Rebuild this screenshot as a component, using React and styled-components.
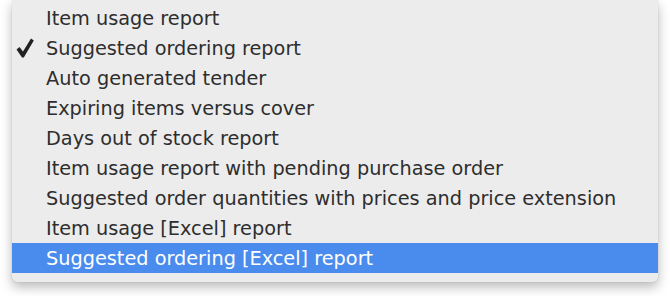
import React from "react";
import styled, { createGlobalStyle } from "styled-components";

const Global = createGlobalStyle`
  html, body { margin: 0; padding: 0; background: #ffffff; }
  body { width: 670px; height: 296px; overflow: hidden; }
`;

const Page = styled.div`
  padding: 0 12px 0 12px;
`;

const Menu = styled.ul`
  list-style: none;
  margin: 0;
  width: 646px;
  padding: 3px 0 9px 0;
  background: #ececec;
  border-radius: 0 0 5px 5px;
  box-shadow: 0 5px 12px rgba(0, 0, 0, 0.28), 0 0 1px rgba(0, 0, 0, 0.25);
  font-family: "DejaVu Sans", Verdana, sans-serif;
  font-size: 19.3px;
`;

const Row = styled.li`
  display: flex;
  align-items: center;
  height: 30px;
  padding-left: 34px;
  position: relative;
  color: ${(p) => (p.$active ? "#ffffff" : "#2e2e2e")};
  background: ${(p) => (p.$active ? "#4a8bee" : "transparent")};
  white-space: nowrap;
`;

const Check = styled.svg`
  position: absolute;
  left: 4px;
  top: 5px;
  width: 18px;
  height: 20px;
`;

const items = [
  "Item usage report",
  "Suggested ordering report",
  "Auto generated tender",
  "Expiring items versus cover",
  "Days out of stock report",
  "Item usage report with pending purchase order",
  "Suggested order quantities with prices and price extension",
  "Item usage [Excel] report",
  "Suggested ordering [Excel] report",
];

export default function App() {
  return (
    <Page>
      <Global />
      <Menu>
        {items.map((t, i) => (
          <Row key={t} $active={i === 8}>
            {i === 1 && (
              <Check viewBox="0 0 18 20">
                <path d="M0.5 11.5 L3.5 9 L7 13.5 L15 0.5 L17.8 2.5 L7.8 19.5 L6 19.5 Z" fill="#222" />
              </Check>
            )}
            {t}
          </Row>
        ))}
      </Menu>
    </Page>
  );
}
